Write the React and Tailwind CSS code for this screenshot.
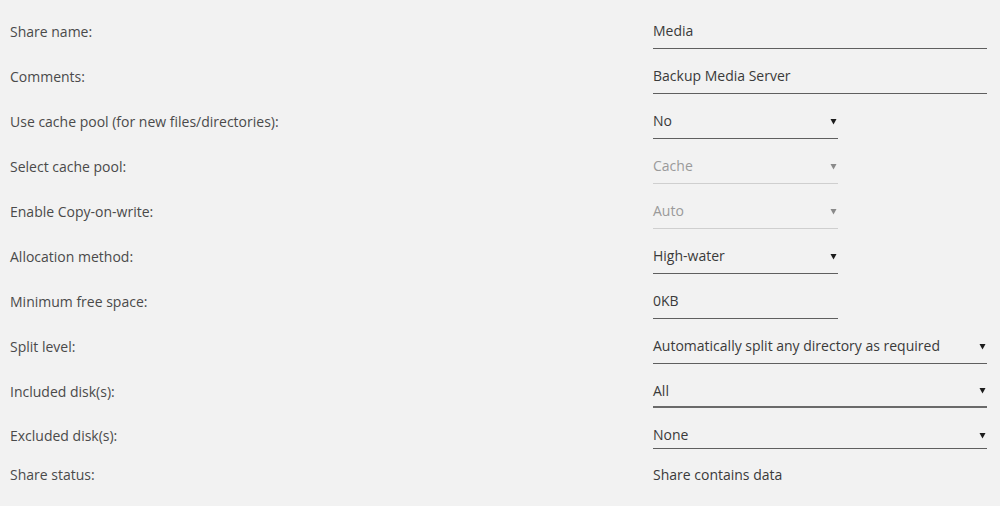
import React from "react";

// Small solid down-pointing caret used at the right end of each select.
function Caret({ muted }) {
  return (
    <svg width="7" height="7" viewBox="0 0 7 7" className={muted ? "text-[#8a8a8a]" : "text-[#1c1c1c]"}>
      <path d="M0.5 1 L6.5 1 L3.5 6.5 Z" fill="currentColor" />
    </svg>
  );
}

function TextInput({ value, wide }) {
  return (
    <div
      className={`flex h-full items-center border-b border-[#5f5f5f] text-[#3a3a3a] ${wide ? "w-[334px]" : "w-[185px]"}`}
    >
      <span>{value}</span>
    </div>
  );
}

function Select({ value, wide, disabled, thick }) {
  const line = disabled ? "border-[#cfcfcf]" : thick ? "border-[#6a6a6a]" : "border-[#5f5f5f]";
  return (
    <div
      className={`flex h-full items-center justify-between pr-[1px] ${thick ? "border-b-2" : "border-b"} ${line} ${
        wide ? "w-[334px]" : "w-[185px]"
      } ${disabled ? "text-[#9a9a9a]" : "text-[#3a3a3a]"}`}
    >
      <span>{value}</span>
      <Caret muted={disabled} />
    </div>
  );
}

const rows = [
  { label: "Share name:", field: <TextInput value="Media" wide /> },
  { label: "Comments:", field: <TextInput value="Backup Media Server" wide /> },
  { label: "Use cache pool (for new files/directories):", field: <Select value="No" /> },
  { label: "Select cache pool:", field: <Select value="Cache" disabled /> },
  { label: "Enable Copy-on-write:", field: <Select value="Auto" disabled /> },
  { label: "Allocation method:", field: <Select value="High-water" /> },
  { label: "Minimum free space:", field: <TextInput value="0KB" /> },
  { label: "Split level:", field: <Select value="Automatically split any directory as required" wide /> },
];

function Row({ label, children, rowClass = "h-[45px]", boxClass = "h-[34px]" }) {
  return (
    <div className={`grid grid-cols-[643px_334px] items-center pl-[10px] ${rowClass}`}>
      <div className="text-[#4a4a4a]">{label}</div>
      <div className={boxClass}>{children}</div>
    </div>
  );
}

export default function App() {
  return (
    <div
      className="min-h-[506px] w-full bg-[#f2f2f2] pt-[9px] text-[14px] leading-none"
      style={{ fontFamily: '"Open Sans", "Noto Sans", sans-serif' }}
    >
      {rows.map((r) => (
        <Row key={r.label} label={r.label}>
          {r.field}
        </Row>
      ))}
      <Row label="Included disk(s):" boxClass="h-[32px]">
        <Select value="All" wide thick />
      </Row>
      <Row label="Excluded disk(s):" rowClass="h-[43px]" boxClass="h-[27px]">
        <Select value="None" wide />
      </Row>
      <Row label="Share status:" rowClass="h-[36px]" boxClass="h-auto">
        <div className="text-[#3a3a3a]">Share contains data</div>
      </Row>
    </div>
  );
}
